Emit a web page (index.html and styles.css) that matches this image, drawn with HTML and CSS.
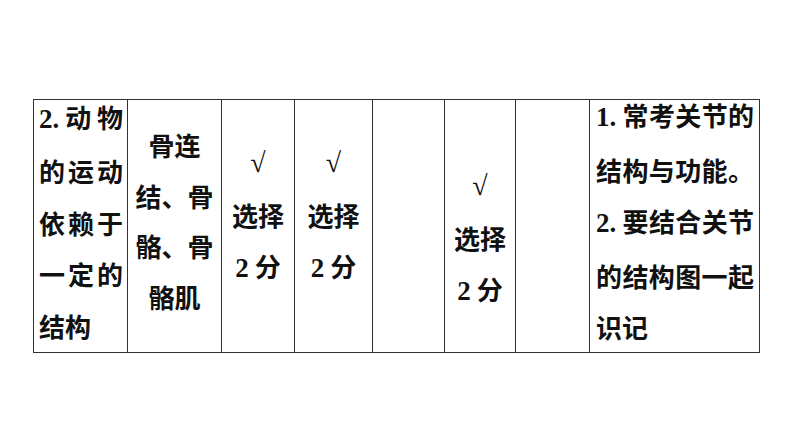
FILE: index.html
```html
<!DOCTYPE html>
<html lang="zh">
<head>
<meta charset="utf-8">
<link rel="stylesheet" href="styles.css">
</head>
<body>
<div class="table">
  <div class="cell left c1">
    <span class="ln"><b class="num">2.</b> 动 物</span>
    <span class="ln">的运动</span>
    <span class="ln">依赖于</span>
    <span class="ln">一定的</span>
    <span class="ln last">结构</span>
  </div>
  <div class="cell center c2">
    <span>骨连</span>
    <span>结、骨</span>
    <span>骼、骨</span>
    <span>骼肌</span>
  </div>
  <div class="cell center up">
    <span class="check">√</span>
    <span>选择</span>
    <span><b class="num">2</b> 分</span>
  </div>
  <div class="cell center up">
    <span class="check">√</span>
    <span>选择</span>
    <span><b class="num">2</b> 分</span>
  </div>
  <div class="cell"></div>
  <div class="cell center down">
    <span class="check">√</span>
    <span>选择</span>
    <span><b class="num">2</b> 分</span>
  </div>
  <div class="cell"></div>
  <div class="cell left c8">
    <span class="ln"><b class="num">1.</b> 常考关节的</span>
    <span class="ln">结构与功能。</span>
    <span class="ln"><b class="num">2.</b> 要结合关节</span>
    <span class="ln">的结构图一起</span>
    <span class="ln last">识记</span>
  </div>
</div>
</body>
</html>
```

FILE: styles.css
```css
html, body {
  margin: 0;
  padding: 0;
  background: #fff;
}

body {
  width: 794px;
  height: 447px;
  overflow: hidden;
  font-family: "Noto Sans CJK SC", "Liberation Serif", serif;
  color: #111;
}

.table {
  margin: 99px 0 0 33px;
  width: 727px;
  display: grid;
  grid-template-columns: 93px 93px 72px 77px 71px 70px 73px 169px;
  grid-template-rows: 252px;
  gap: 1px;
  padding: 1px;
  background: #333;
  box-sizing: border-box;
}

.cell {
  background: #fff;
  display: flex;
  flex-direction: column;
  justify-content: center;
  font-size: 26px;
  line-height: 51.5px;
  font-weight: 700;
  padding-bottom: 10px;
  box-sizing: border-box;
}

.cell span {
  display: block;
  white-space: nowrap;
}

.left .ln {
  text-align: justify;
  text-align-last: justify;
}

.left .ln.last {
  text-align-last: left;
}

.c1 {
  padding-left: 5px;
  padding-right: 4px;
}

.c8 {
  padding-left: 6px;
  padding-right: 5px;
}

.center {
  align-items: center;
  text-align: center;
}

.c2 {
  line-height: 50.5px;
}

.up {
  padding-bottom: 20px;
}

.down {
  padding-top: 26px;
  padding-bottom: 0;
}

.num {
  font-family: "Liberation Serif", serif;
  font-weight: 700;
  font-size: 27px;
}

.check {
  font-family: "Liberation Serif", serif;
  font-weight: 400;
  font-size: 28px;
}
```
